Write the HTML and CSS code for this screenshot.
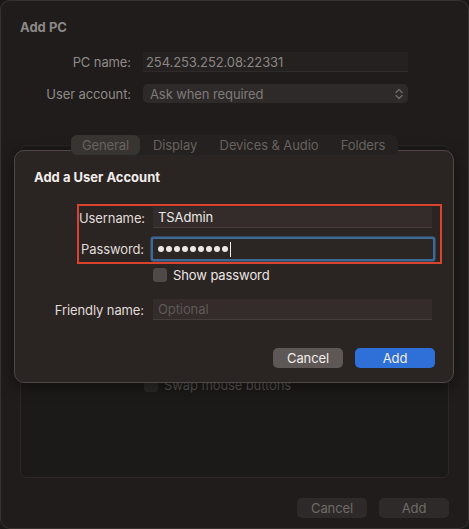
FILE: index.html
```html
<!DOCTYPE html>
<html>
<head>
<meta charset="utf-8">
<link rel="stylesheet" href="styles.css">
</head>
<body>
<div class="window">
  <div class="win-title">Add PC</div>
  <div class="win-form">
    <div class="win-label">PC name:</div>
    <div class="win-field">254.253.252.08:22331</div>
    <div class="win-label">User account:</div>
    <div class="win-popup">
      <span>Ask when required</span>
      <svg class="chev" width="8" height="12" viewBox="0 0 8 12"><path d="M1 4.5 L4 1.5 L7 4.5 M1 7.5 L4 10.5 L7 7.5" fill="none" stroke="#6f6a68" stroke-width="1.4" stroke-linecap="round" stroke-linejoin="round"/></svg>
    </div>
  </div>
  <div class="tabs-wrap">
    <div class="tabs">
      <div class="tab sel">General</div>
      <div class="tab">Display</div>
      <div class="tab">Devices &amp; Audio</div>
      <div class="tab">Folders</div>
    </div>
  </div>
  <div class="tab-box">
    <div class="swap-row">
      <span class="win-check"></span>
      <span>Swap mouse buttons</span>
    </div>
  </div>
  <div class="win-buttons">
    <div class="win-btn">Cancel</div>
    <div class="win-btn">Add</div>
  </div>

  <div class="sheet">
    <div class="sheet-title">Add a User Account</div>
    <div class="highlight">
      <div class="row">
        <div class="label narrow">Username:</div>
        <div class="field">TSAdmin</div>
      </div>
      <div class="row pw-row">
        <div class="label narrow">Password:</div>
        <div class="field focus" aria-label="password">
          <span class="dot"></span><span class="dot"></span><span class="dot"></span><span class="dot"></span><span class="dot"></span><span class="dot"></span><span class="dot"></span><span class="dot"></span><span class="dot"></span><span class="caret"></span>
        </div>
      </div>
    </div>
    <div class="check-row">
      <span class="check"></span>
      <span>Show password</span>
    </div>
    <div class="row friendly">
      <div class="label wide">Friendly name:</div>
      <div class="field placeholder">Optional</div>
    </div>
    <div class="sheet-buttons">
      <div class="btn cancel">Cancel</div>
      <div class="btn primary">Add</div>
    </div>
  </div>
</div>
</body>
</html>
```

FILE: styles.css
```css
* { box-sizing: border-box; }
html, body { margin: 0; padding: 0; }
body {
  background: #1b1918;
  font-family: Inter, "Noto Sans", "Liberation Sans", sans-serif;
  font-size: 13px;
  line-height: 16px;
  letter-spacing: -0.1px;
}
.window {
  position: relative;
  width: 469px;
  height: 529px;
  background: #1f1c1b;
  border: 1px solid #363230;
  border-radius: 10px;
  padding: 18px 19px 0 18px;
  display: flex;
  flex-direction: column;
}
.win-title {
  font-weight: 700;
  color: #8c8785;
  margin-left: 1px;
  letter-spacing: 0;
}
.win-form {
  display: grid;
  grid-template-columns: 112px 265px;
  column-gap: 12px;
  row-gap: 12px;
  margin-top: 17px;
}
.win-label {
  text-align: right;
  color: #8e8a88;
  white-space: nowrap;
  line-height: 20px;
}
.win-field {
  height: 20px;
  line-height: 20px;
  background: #242120;
  border-bottom: 1px solid #2f2b2a;
  color: #8b8684;
  padding-left: 3px;
}
.win-popup {
  height: 19px;
  background: #2e2a29;
  border-radius: 5px;
  color: #7f7a78;
  padding-left: 7px;
  display: flex;
  align-items: center;
  justify-content: space-between;
  padding-right: 5px;
}
.tabs-wrap {
  display: flex;
  margin-top: 31px;
  padding-left: 52px;
  position: relative;
  z-index: 1;
}
.tabs {
  display: flex;
  width: 327px;
  height: 20px;
  background: #242120;
  border-radius: 6px;
  color: #67625f;
}
.tab {
  line-height: 20px;
  text-align: center;
  white-space: nowrap;
}
.tab:nth-child(1) { width: 69px; }
.tab:nth-child(2) { width: 70px; }
.tab:nth-child(3) { width: 118px; }
.tab:nth-child(4) { width: 70px; }
.tab.sel { background: #383432; border-radius: 6px; }
.tab-box {
  margin-top: -10px;
  margin-left: 1px;
  height: 333px;
  border: 1px solid #2b2827;
  border-radius: 6px;
  background: #1c1a19;
  padding-top: 231px;
  padding-left: 123px;
}
.swap-row {
  display: flex;
  align-items: center;
  gap: 6px;
  color: #57524f;
}
.win-check {
  width: 14px;
  height: 14px;
  border-radius: 3px;
  background: #2c2928;
}
.win-buttons {
  display: flex;
  justify-content: flex-end;
  gap: 12px;
  margin-top: 20px;
}
.win-btn {
  width: 70px;
  height: 20px;
  line-height: 20px;
  text-align: center;
  border-radius: 5px;
  background: #2d2a29;
  color: #6f6a68;
}

/* sheet */
.sheet {
  position: absolute;
  left: 13px;
  top: 149px;
  width: 440px;
  height: 233px;
  background: #2a2422;
  border: 1px solid #4f4846;
  border-radius: 10px;
  box-shadow: 0 4px 16px rgba(0,0,0,0.45);
  padding: 18px 0 0 19px;
  display: flex;
  flex-direction: column;
  color: #e2dedc;
}
.sheet-title {
  font-weight: 700;
  color: #f1edeb;
  letter-spacing: 0;
}
.highlight {
  margin-top: 19px;
  margin-left: 43px;
  width: 365px;
  border: 2px solid #d9432d;
  padding: 1px 8px 3px 0;
}
.row {
  display: flex;
  align-items: center;
  gap: 9px;
}
.pw-row { margin-top: 11px; }
.label {
  text-align: right;
  white-space: nowrap;
  color: #e0dcda;
  flex: none;
}
.label.narrow { width: 65px; }
.label.wide { width: 110px; }
.field {
  width: 279px;
  height: 21px;
  line-height: 21px;
  background: #332c2a;
  border-bottom: 1px solid #463e3c;
  color: #ece8e6;
  padding-left: 5px;
  flex: none;
  display: flex;
  align-items: center;
}
.field.focus {
  height: 20px;
  width: 280px;
  border-bottom: none;
  background: #2b2523;
  box-shadow: 0 0 0 2.5px #3d6997;
  border-radius: 1px;
}
.dot {
  width: 6px;
  height: 6px;
  border-radius: 50%;
  background: #ece8e6;
  margin-right: 2px;
  flex: none;
}
.caret {
  width: 1px;
  height: 15px;
  background: #f2eeec;
  flex: none;
}
.field.placeholder { color: #5f5856; }
.check-row {
  display: flex;
  align-items: center;
  gap: 6px;
  margin-top: 3px;
  margin-left: 119px;
  color: #ebe7e5;
}
.check {
  width: 14px;
  height: 14px;
  border-radius: 3px;
  background: #4f4947;
  flex: none;
}
.friendly { margin-top: 16px; }
.sheet-buttons {
  display: flex;
  justify-content: flex-end;
  gap: 12px;
  margin-top: 28px;
  padding-right: 18px;
}
.btn {
  height: 20px;
  line-height: 20px;
  text-align: center;
  border-radius: 5px;
  color: #f2eeec;
}
.btn.cancel { width: 70px; background: #5d5755; }
.btn.primary { width: 80px; background: #2f6fd8; }
```
